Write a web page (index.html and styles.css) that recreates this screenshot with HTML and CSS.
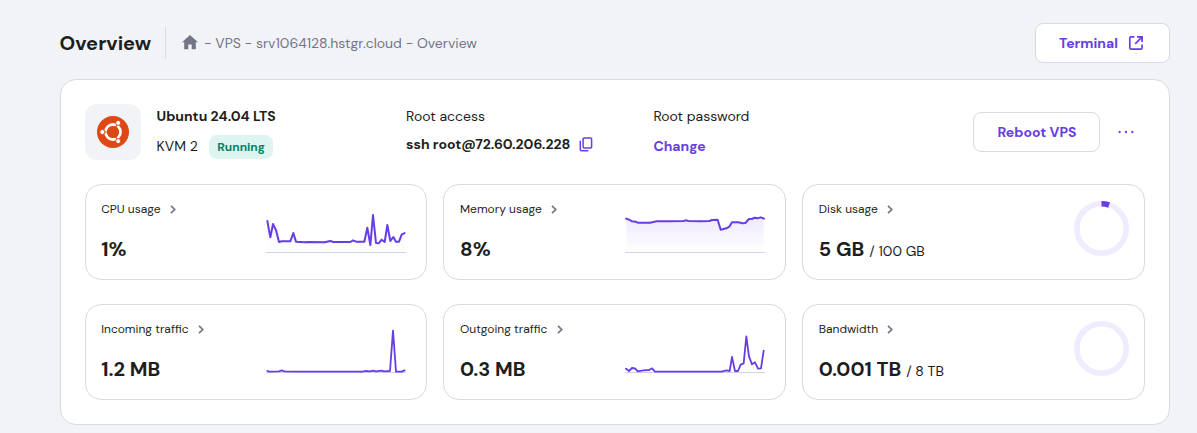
FILE: index.html
```
<!DOCTYPE html>
<html lang="en">
<head>
<meta charset="utf-8">
<title>Overview</title>
<link rel="stylesheet" href="styles.css">
</head>
<body>
<header class="topbar">
  <h1 class="title">Overview</h1>
  <nav class="crumbs">
    <svg class="home" width="16" height="15" viewBox="0 0 16 15"><path d="M8 0 16 7.3H13.8V14.3H9.7V9.4H6.3V14.3H2.2V7.3H0Z" fill="#727586"/></svg>
    <span class="crumb-text">- VPS - srv1064128.hstgr.cloud - Overview</span>
  </nav>
  <button class="btn terminal"><span>Terminal</span>
    <svg width="16" height="16" viewBox="0 0 16 16" fill="none" stroke="#673de6" stroke-width="1.7"><path d="M6.4 1.9H3.2Q1.8 1.9 1.8 3.3V12.7Q1.8 14.1 3.2 14.1H12.7Q14.1 14.1 14.1 12.7V9.5M9 1.9H14.1V7M13.8 2.2 7.2 8.8"/></svg>
  </button>
</header>
<main class="card">
  <section class="server">
    <div class="os-icon">
      <svg width="32" height="32" viewBox="0 0 32 32">
        <circle cx="16" cy="16" r="16" fill="#dd4814"/>
        <circle cx="16" cy="16" r="7.5" fill="none" stroke="#fff" stroke-width="2.8"/>
        <g stroke="#dd4814" stroke-width="1.1"><path d="M16 16H5M16 16 21.5 6.5M16 16 21.5 25.5"/></g>
        <circle cx="16" cy="16" r="6" fill="#dd4814"/>
        <g fill="#fff" stroke="#dd4814" stroke-width=".9"><circle cx="5.3" cy="16" r="2.5"/><circle cx="21.2" cy="6.9" r="2.5"/><circle cx="21.2" cy="25.1" r="2.5"/></g>
      </svg>
    </div>
    <div class="os">
      <strong class="os-name">Ubuntu 24.04 LTS</strong>
      <div class="plan"><span class="plan-name">KVM 2</span><span class="badge">Running</span></div>
    </div>
    <div class="access">
      <span class="label">Root access</span>
      <div class="ssh"><strong>ssh root@72.60.206.228</strong>
        <svg width="14" height="15" viewBox="0 0 14 15" fill="none" stroke="#673de6" stroke-width="1.5"><rect x="4.1" y="1" width="8.5" height="10" rx="1"/><path d="M1.3 3.7V12.4Q1.3 13.7 2.6 13.7H9.3"/></svg>
      </div>
    </div>
    <div class="password">
      <span class="label">Root password</span>
      <a class="change">Change</a>
    </div>
    <button class="btn reboot"><span>Reboot VPS</span></button>
    <svg class="more" width="16" height="4" viewBox="0 0 16 4" fill="#673de6"><circle cx="1.6" cy="2" r="1.15"/><circle cx="8" cy="2" r="1.15"/><circle cx="14.4" cy="2" r="1.15"/></svg>
  </section>
  <section class="tiles">
    <article class="tile">
      <div class="info">
        <h2 class="name"><span>CPU usage</span><svg class="chev" width="6" height="9" viewBox="0 0 6 9"><path d="M1 .9 4.7 4.5 1 8.1"/></svg></h2>
        <p class="value">1%</p>
      </div>
      <svg class="chart" viewBox="33 30 420 150">
        <defs><linearGradient id="fade" x1="0" x2="0" y1="60" y2="172" gradientUnits="userSpaceOnUse"><stop offset="0" stop-color="#673de6" stop-opacity=".12"/><stop offset="1" stop-color="#673de6" stop-opacity="0"/></linearGradient></defs>
        <path fill="url(#fade)" opacity=".6" d="M37 78 46 127 54 87 63 105 72 141H106L115 114 123 140 328 140 337 98 346 150 354 60 363 144 380 134 389 141 397 90 406 138 415 126 423 140 432 140 440 119 449 114V172H37Z"/>
        <path class="axis" d="M33 172.5H453"/>
        <polyline class="line" points="37,78 46,127 54,87 63,105 72,141 80,139 106,139 115,114 123,140 149,142 158,141 209,142 226,138 235,141 286,141 294,136 303,140 328,140 337,98 346,150 354,60 363,144 371,145 380,134 389,141 397,90 406,138 415,126 423,140 432,140 440,119 449,114"/>
      </svg>
    </article>
    <article class="tile">
      <div class="info">
        <h2 class="name"><span>Memory usage</span><svg class="chev" width="6" height="9" viewBox="0 0 6 9"><path d="M1 .9 4.7 4.5 1 8.1"/></svg></h2>
        <p class="value">8%</p>
      </div>
      <svg class="chart" viewBox="30 30 420 150">
        <path fill="url(#fade)" d="M34 71 50 79 68 83 105 83 125 79 283 78 308 74 317 104 334 100 351 82 391 84 402 72 419 68 446 71V172H34Z"/>
        <path class="axis" d="M30 172.5H450"/>
        <polyline class="line" points="33,71 45,75 50,79 62,80 68,83 105,83 125,79 165,79 206,78 214,76 220,78 258,79 283,78 291,75 308,74 317,104 334,100 343,95 351,82 370,82 382,85 391,84 402,72 411,72 419,68 428,70 437,67 447,71"/>
      </svg>
    </article>
    <article class="tile">
      <div class="info">
        <h2 class="name"><span>Disk usage</span><svg class="chev" width="6" height="9" viewBox="0 0 6 9"><path d="M1 .9 4.7 4.5 1 8.1"/></svg></h2>
        <p class="value">5 GB<small>/ 100 GB</small></p>
      </div>
      <svg class="ring" viewBox="-.5 -.5 56 56"><circle cx="28" cy="28" r="24.7"/><path d="M28 3.3A24.7 24.7 0 0 1 35.6 4.5"/></svg>
    </article>
    <article class="tile">
      <div class="info">
        <h2 class="name"><span>Incoming traffic</span><svg class="chev" width="6" height="9" viewBox="0 0 6 9"><path d="M1 .9 4.7 4.5 1 8.1"/></svg></h2>
        <p class="value">1.2 MB</p>
      </div>
      <svg class="chart" viewBox="33 30 420 150">
        <path class="axis" d="M33 172.5H453"/>
        <polyline class="line thin" points="37,167 42,170 72,169 80,166 88,169 125,170 322,170 330,168 345,169 354,167 363,169 380,167 388,169 405,168 414,47 423,170 440,170 449,166"/>
      </svg>
    </article>
    <article class="tile">
      <div class="info">
        <h2 class="name"><span>Outgoing traffic</span><svg class="chev" width="6" height="9" viewBox="0 0 6 9"><path d="M1 .9 4.7 4.5 1 8.1"/></svg></h2>
        <p class="value">0.3 MB</p>
      </div>
      <svg class="chart" viewBox="30 30 420 150">
        <path class="axis" d="M30 172.5H450"/>
        <polyline class="line thin" points="33,161 42,168 51,159 60,160 68,169 85,166 103,165 111,160 120,170 320,170 334,166 344,168 351,126 360,168 369,168 377,149 386,145 394,64 402,124 411,148 420,142 429,161 438,160 446,107"/>
      </svg>
    </article>
    <article class="tile">
      <div class="info">
        <h2 class="name"><span>Bandwidth</span><svg class="chev" width="6" height="9" viewBox="0 0 6 9"><path d="M1 .9 4.7 4.5 1 8.1"/></svg></h2>
        <p class="value">0.001 TB<small>/ 8 TB</small></p>
      </div>
      <svg class="ring" viewBox="-.5 -.5 56 56"><circle cx="28" cy="28" r="24.7"/></svg>
    </article>
  </section>
</main>
</body>
</html>
```
FILE: styles.css
```
* { box-sizing: border-box; }
body {
  margin: 0;
  height: 433px;
  padding: 23px 27px 0 59.6px;
  overflow: hidden;
  background: #f2f3f6;
  color: #1d1e20;
  font: 14px/20px "DM Sans", Inter, sans-serif;
  white-space: nowrap;
}
h1, h2, p { margin: 0; }
svg { flex: none; display: block; }
.topbar { display: flex; align-items: center; height: 40px; }
.title { width: 106.4px; height: 32px; font-size: 20px; line-height: 32px; font-weight: 700; border-right: 1px solid #d8dae0; }
.crumbs { display: flex; align-items: center; gap: 6px; margin-left: 16px; color: #727586; }
.home { margin-bottom: 2px; }
.btn {
  height: 40px;
  display: flex;
  align-items: center;
  justify-content: center;
  gap: 10px;
  padding: 0;
  background: #fff;
  border: 1px solid #d8dae0;
  border-radius: 8px;
  color: #673de6;
  font: 700 14px/20px "DM Sans", Inter, sans-serif;
}
.terminal { width: 135px; margin-left: auto; padding-right: 2px; }
.card {
  height: 346px;
  margin-top: 16px;
  padding: 24px;
  background: #fff;
  border: 1px solid #d8dae0;
  border-radius: 16px;
}
.server { display: flex; height: 56px; }
.os-icon { width: 56px; height: 56px; display: grid; place-items: center; background: #f2f3f6; border-radius: 12px; }
.os { width: 249.4px; margin-left: 16px; padding-top: 2px; }
.os-name, .label, .change { display: block; }
.plan { display: flex; align-items: center; gap: 11.4px; margin-top: 9px; height: 24px; }
.plan-name { margin-bottom: 2px; }
.badge { width: 64px; height: 24px; border-radius: 8px; background: #def4f0; color: #008361; font-size: 12px; line-height: 24px; font-weight: 700; text-align: center; }
.access { width: 247.4px; padding-top: 2px; }
.ssh { display: flex; align-items: center; gap: 9px; margin-top: 8px; }
.password { padding-top: 2px; }
.change { margin-top: 10px; font-weight: 700; color: #673de6; }
.reboot { width: 127px; margin: 8px 18px 0 auto; padding-left: 1px; }
.more { margin: 26px 11px 0 0; }
.tiles { display: grid; grid-template-columns: repeat(3, 1fr); grid-auto-rows: 96px; column-gap: 16px; row-gap: 24px; margin-top: 24px; }
.tile { display: flex; justify-content: space-between; border: 1px solid #d8dae0; border-radius: 16px; padding: 15px 15px 0 15.6px; }
.name { display: flex; align-items: center; gap: 9.2px; height: 18px; font-size: 12px; line-height: 18px; font-weight: 400; }
.chev path { fill: none; stroke: #727586; stroke-width: 1.7; }
.value { margin-top: 15px; font-size: 20px; line-height: 32px; font-weight: 700; }
.value small { margin-left: 5px; font-size: 14px; font-weight: 400; }
.chart { width: 140px; height: 50px; margin: 5px 5px 0 0; overflow: visible; }
.axis { stroke: #ccd3e6; stroke-width: 3; }
.line { fill: none; stroke: #673de6; stroke-width: 6; stroke-linejoin: round; stroke-linecap: round; }
.line.thin { stroke-width: 5.4; }
.ring { width: 56px; height: 56px; fill: none; stroke-width: 5.6; }
.ring circle { stroke: #f0ebff; }
.ring path { stroke: #673de6; }
```
